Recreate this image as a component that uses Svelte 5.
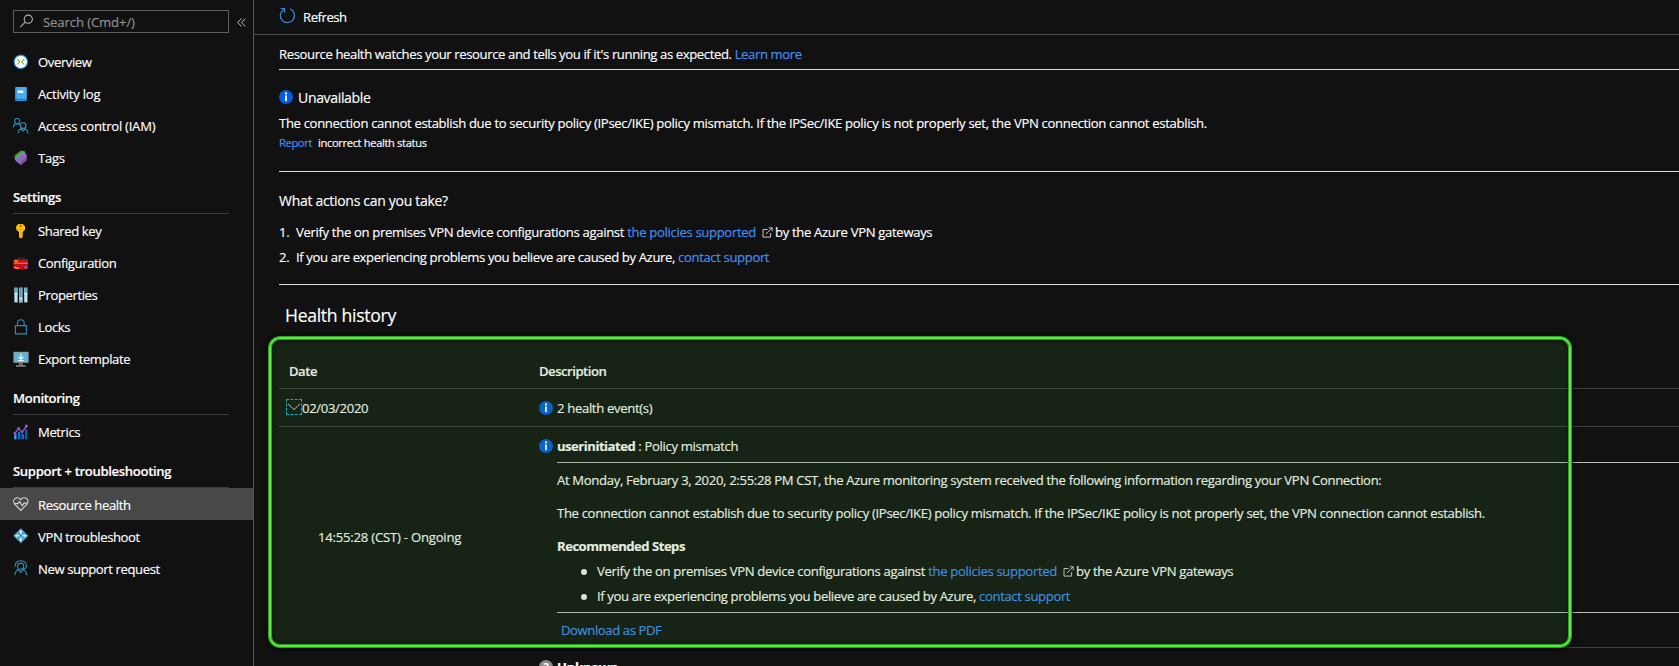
<script>
  const groups = [
    {
      title: '',
      items: [
        { icon: 'overview', label: 'Overview' },
        { icon: 'log', label: 'Activity log', loose: true },
        { icon: 'iam', label: 'Access control (IAM)', loose: true },
        { icon: 'tags', label: 'Tags', loose: true }
      ]
    },
    {
      title: 'Settings',
      items: [
        { icon: 'key', label: 'Shared key' },
        { icon: 'config', label: 'Configuration' },
        { icon: 'props', label: 'Properties' },
        { icon: 'lock', label: 'Locks' },
        { icon: 'export', label: 'Export template' }
      ]
    },
    { title: 'Monitoring', items: [{ icon: 'metrics', label: 'Metrics' }] },
    {
      title: 'Support + troubleshooting',
      items: [
        { icon: 'health', label: 'Resource health', selected: true },
        { icon: 'vpn', label: 'VPN troubleshoot' },
        { icon: 'support', label: 'New support request' }
      ]
    }
  ];
</script>

{#snippet info(size)}
  <svg class="info" width={size} height={size} viewBox="0 0 14 14">
    <circle cx="7" cy="7" r="7" fill="#015cda" />
    <circle cx="7" cy="3.4" r="1.15" fill="#fff" />
    <rect x="6.1" y="5.4" width="1.8" height="5.8" fill="#fff" />
  </svg>
{/snippet}

{#snippet external()}
  <svg class="ext" width="11" height="11" viewBox="0 0 11 11" fill="none" stroke="#c8c8c8">
    <path d="M5.5 2.5H1v7.6h7.6V6M3.8 7.2L10 .9M6.7.8h3.5v3.5" />
  </svg>
{/snippet}

{#snippet glyph(name)}
  <svg width="16" height="16" viewBox="0 0 16 16" fill="none">
    {#if name === 'overview'}
      <circle cx="7.8" cy="7.8" r="6.7" fill="#fff" stroke="#2b83d6" stroke-width="1.1" />
      <path d="M4.2 5l2.7 2.8-2.7 2.8M11.4 5L8.7 7.8l2.7 2.8" stroke="#76bc2d" stroke-width="1.1" />
    {:else if name === 'log'}
      <rect x="2" y="1" width="11.6" height="14" rx=".8" fill="#268fe0" />
      <path d="M3.4 1h9.4q.8 0 .8.8V13H3.4z" fill="#46adf0" />
      <path d="M2 13.3h11.6" stroke="#1878c8" stroke-width=".8" />
      <rect x="4.6" y="4.5" width="5.8" height="2.5" rx=".4" fill="#e9f7ff" />
    {:else if name === 'iam'}
      <g stroke="#368fb8" stroke-width="1.1">
        <circle cx="4.2" cy="3.1" r="2.6" />
        <circle cx="10.2" cy="7.6" r="2.8" />
        <path d="M.4 9.5c0-2.3 1.5-3.7 3.6-3.8M4.2 5.7l3 1.2M5.3 15.3c.1-3 1.9-4.8 4.7-4.8s4.5 1.8 5 4.8M7.7 10.8l2.4 2.2 2.5-2.3" />
      </g>
    {:else if name === 'tags'}
      <path d="M1.6 5.6L8 .6l4 .6.4 5.8-8.6 3.8-2.2-1.6z" fill="#579b18" />
      <path d="M2.2 8.2L10.2 2l2.4.9-7.4 8.9-2.8-1.6z" fill="#35b5dc" />
      <path d="M2.9 9.1L10.8 2.9l2.8 1v6.3l-5.8 4.9-4.9-3.8z" fill="#9468b8" />
      <path d="M7.8 15.1L13.6 10.2V7L7.4 12.4z" fill="#7a4aa4" />
    {:else if name === 'key'}
      <path d="M5.3.9h4.4L12 3.3v3.4L9.7 9v5.2L7.6 15.6 6 14.1V9L3.2 6.7V3.3z" fill="#ffc20b" />
      <circle cx="7.6" cy="2.9" r="1.1" fill="#8a6206" />
      <path d="M4 6.5h7.2M7.9 9v5.1" stroke="#ef9b0b" stroke-width=".9" />
    {:else if name === 'config'}
      <path d="M5 4.5V2.9h6v1.6" stroke="#303030" stroke-width="1.2" />
      <rect x=".6" y="4.2" width="14.4" height="10" rx="1" fill="#bf1218" />
      <path d="M.6 8.2h14.4" stroke="#f0706a" stroke-width="1.2" />
      <path d="M1.2 5h4.2L4.5 7.5H1.2z" fill="#f06a20" />
      <path d="M1 12.2q2.5 1.4 5 .9" stroke="#ff9b46" stroke-width="1.5" />
      <circle cx="12.8" cy="12.2" r="1.3" fill="#8b5ad0" />
    {:else if name === 'props'}
      <rect x="1.4" y=".6" width="3.2" height="14.8" fill="#c3e4ef" />
      <rect x="6.3" y=".6" width="3.2" height="14.8" fill="#c3e4ef" />
      <rect x="11.2" y=".6" width="3.2" height="14.8" fill="#c3e4ef" />
      <path d="M3 1v5M7.9 1v9.6M12.8 1v5" stroke="#4ba3cd" stroke-width="1.8" />
      <path d="M6.3 12h3.2v3.4H6.3z" fill="#82b9ce" />
      <path d="M1.4 6.4h3.2M11.2 6.4h3.2M6.3 11.8h3.2" stroke="#fff" stroke-width=".8" />
    {:else if name === 'lock'}
      <path d="M2.4 6.6h11v8.2h-11zM4.5 6.3V4q0-3.3 3.3-3.3T11.2 4v2.3" stroke="#3089b0" stroke-width="1.15" />
    {:else if name === 'export'}
      <path d="M6 11.8h3.6l.6 2.6H5.4z" fill="#666" />
      <rect x=".4" y=".8" width="15.2" height="11" fill="#999" />
      <rect x="1.4" y="1.7" width="13.2" height="9.2" fill="#58b5dd" />
      <path d="M3 15h9.6" stroke="#aaa" stroke-width="1.2" />
      <path d="M7.9 2.8v5.2M5.4 5.8l2.5 2.5 2.5-2.5M5.2 9.6h5.4" stroke="#fff" stroke-width="1.1" />
    {:else if name === 'metrics'}
      <path d="M2.5 15.2V9.8M6.1 15.2V7.5M9.8 15.2v-5.3" stroke="#0f6ac8" stroke-width="2.6" />
      <path d="M13.2 15.2V5.4" stroke="#0a5aa4" stroke-width="2.4" />
      <path d="M2.2 15.2V11" stroke="#6fb4ee" stroke-width="1.2" />
      <path d="M1.6 9.5l4-5.1 3.6 3.7 4.3-6.3" stroke="#a05ce0" stroke-width="1.3" />
      <g fill="#9a54dc">
        <circle cx="1.8" cy="9.3" r="1.2" />
        <circle cx="5.6" cy="4.4" r="1.3" />
        <circle cx="9.2" cy="8" r="1.2" />
        <circle cx="13.4" cy="1.9" r="1.5" />
      </g>
    {:else if name === 'health'}
      <g stroke="#d8d8d8" stroke-width="1.1">
        <path d="M7.8 14.4L1.6 8.1C.2 6.4.4 3.9 1.9 2.6c1.7-1.4 4.4-1.2 5.9 1 1.5-2.2 4.2-2.4 5.9-1 1.6 1.3 1.7 3.8.3 5.5z" />
        <path d="M2 7.6h3l1.6-2.1 2.7 4.2 1.7-2.6h2.8" />
      </g>
    {:else if name === 'vpn'}
      <path d="M7.8.3l7.5 7.5-7.5 7.5L.3 7.8z" fill="#4aa6d5" />
      <path d="M7.8 6.6V3M7.8 9v3.6M6.6 7.8H3M9 7.8h3.6" stroke="#fff" stroke-width="1.1" />
      <path d="M7.8 2.1l1.5 1.9h-3zM7.8 13.5l1.5-1.9h-3zM2.1 7.8L4 6.3v3zM13.5 7.8l-1.9-1.5v3z" fill="#fff" />
      <circle cx="7.8" cy="7.8" r="1" fill="#2672a5" />
    {:else}
      <g stroke="#368fb8" stroke-width="1.1">
        <path d="M2.3 6.7C1.7 3 4 .7 7.7.7s6.2 2.4 5.7 6.3c-.1 1.2-1 1.8-2.4 1.8H8.6" />
        <circle cx="7.6" cy="6.2" r="3.1" />
        <path d="M1.9 15.3c.2-3.2 1.6-5.2 3.8-6.4M13.7 15.3c-.2-3-1.6-5-3.6-6.2M5.2 9.4l2.5 3 2.6-3" />
      </g>
    {/if}
  </svg>
{/snippet}

{#snippet policyStep()}
  <span>Verify the on premises VPN device configurations against <a href="#p">the policies supported</a></span>{@render external()}<span>by the Azure VPN gateways</span>
{/snippet}

{#snippet supportStep()}
  <span class="ask">If you are experiencing problems you believe are caused by Azure, <a href="#s">contact support</a></span>
{/snippet}

<div class="page">
  <aside>
    <div class="searchrow">
      <div class="search">
        <svg width="15" height="15" viewBox="0 0 15 15" fill="none" stroke="#b4b4b4" stroke-width="1.1">
          <circle cx="9.3" cy="5.2" r="4.1" />
          <path d="M6.3 8.2L1.2 13.2" />
        </svg>
        <span>Search (Cmd+/)</span>
      </div>
      <svg class="collapse" width="9" height="9" viewBox="0 0 9 9" fill="none" stroke="#b8b8b8">
        <path d="M4.4.5l-3.6 4 3.6 4M8.2.5l-3.6 4 3.6 4" />
      </svg>
    </div>
    {#each groups as group}
      <nav>
        {#if group.title}
          <h3>{group.title}</h3>
        {/if}
        {#each group.items as item}
          <div class="item" class:selected={item.selected} class:loose={item.loose}>
            {@render glyph(item.icon)}
            <span>{item.label}</span>
          </div>
        {/each}
      </nav>
    {/each}
  </aside>

  <main>
    <div class="toolbar">
      <svg width="17" height="18" viewBox="0 0 17 18" fill="none" stroke="#3d86e0" stroke-width="1.2">
        <path d="M11 1.9A7.1 7.1 0 1 1 5 2.3M1.6 1.5h4v4" />
      </svg>
      <span>Refresh</span>
    </div>
    <div class="content">
      <p class="intro">Resource health watches your resource and tells you if it's running as expected. <a href="#l">Learn more</a></p>
      <hr />
      <div class="status">{@render info(14)}<span>Unavailable</span></div>
      <p class="reason">The connection cannot establish due to security policy (IPsec/IKE) policy mismatch. If the IPSec/IKE policy is not properly set, the VPN connection cannot establish.</p>
      <p class="report"><a href="#r">Report</a><span>incorrect health status</span></p>
      <hr />
      <p class="question">What actions can you take?</p>
      <div class="step"><b>1.</b>{@render policyStep()}</div>
      <div class="step"><b>2.</b>{@render supportStep()}</div>
      <hr class="last" />
      <h2>Health history</h2>

      <div class="table">
        <div class="row head"><span>Date</span><span>Description</span></div>
        <div class="row day">
          <div class="date">
            <span class="toggle">
              <svg width="14" height="8" viewBox="0 0 14 8" fill="none" stroke="#d0d0d0"><path d="M1 .8l6 5.8L13 .8" /></svg>
            </span>
            <span>02/03/2020</span>
          </div>
          <div class="desc">{@render info(14)}<span>2 health event(s)</span></div>
        </div>
        <div class="row event">
          <span class="time">14:55:28 (CST) - Ongoing</span>
          <div class="body">
            <div class="desc title">{@render info(14)}<span><strong>userinitiated</strong> : Policy mismatch</span></div>
            <div class="details">
              <p class="when">At Monday, February 3, 2020, 2:55:28 PM CST, the Azure monitoring system received the following information regarding your VPN Connection:</p>
              <p class="reason">The connection cannot establish due to security policy (IPsec/IKE) policy mismatch. If the IPSec/IKE policy is not properly set, the VPN connection cannot establish.</p>
              <p class="recommended"><strong>Recommended Steps</strong></p>
              <div class="step bullet"><i></i>{@render policyStep()}</div>
              <div class="step bullet"><i></i>{@render supportStep()}</div>
            </div>
            <a class="download" href="#d">Download as PDF</a>
          </div>
        </div>
        <div class="row unknown">
          <span></span>
          <div class="desc">
            <span class="qmark">?</span><strong>Unknown</strong>
          </div>
        </div>
        <div class="highlight"></div>
      </div>
    </div>
  </main>
</div>

<style>
  :global(body) {
    margin: 0;
    background: #111;
    overflow: hidden;
  }
  .page {
    display: flex;
    width: 100vw;
    height: 666px;
    overflow: hidden;
    background: #111;
    color: #fff;
    font: 13.1px/20px 'Open Sans', 'Noto Sans', sans-serif;
    letter-spacing: -0.33px;
    white-space: nowrap;
    -webkit-text-stroke: 0.15px;
  }
  p, h2, h3, hr { margin: 0; }
  a { color: #4490f8; text-decoration: none; }
  svg { flex: none; display: block; }
  strong { letter-spacing: -0.5px; }
  aside {
    box-sizing: border-box;
    flex: none;
    width: 254px;
    border-right: 1px solid #565656;
  }
  .searchrow {
    display: flex;
    align-items: center;
    gap: 8px;
    padding: 10px 0 13px 13px;
  }
  .search {
    box-sizing: border-box;
    display: flex;
    align-items: center;
    gap: 9px;
    width: 216px;
    height: 23px;
    padding-left: 5px;
    border: 1px solid #5f5f5f;
    color: #929292;
    letter-spacing: -0.1px;
  }
  .collapse { margin-top: 2px; }
  .item {
    display: flex;
    align-items: center;
    gap: 9px;
    height: 32px;
    padding-left: 13px;
    letter-spacing: -0.4px;
  }
  .loose { letter-spacing: -0.25px; }
  .selected { background: #484848; }
  h3 {
    height: 25px;
    margin: 0 24px 1px 13px;
    padding-top: 14px;
    border-bottom: 1px solid #3c3c3c;
    font-size: 13.1px;
    font-weight: 600;
    line-height: 18px;
  }
  nav:last-child h3 { margin-bottom: 0; }
  nav:last-child .item span { padding-top: 2px; }
  main { flex: 1; min-width: 0; }
  .toolbar {
    display: flex;
    align-items: center;
    gap: 7px;
    height: 34px;
    padding-left: 25px;
    border-bottom: 1px solid #4c4c4c;
    letter-spacing: -0.45px;
  }
  .toolbar svg { margin-top: -2px; }
  .content { padding-left: 25px; }
  hr { border: 0; height: 1px; background: #dcdcdc; }
  .intro { padding: 10px 0 5px; line-height: 19px; letter-spacing: -0.39px; }
  .status {
    display: flex;
    align-items: center;
    gap: 5px;
    margin-top: 18px;
    font-size: 14px;
  }
  .status .info { margin-top: -3px; }
  .content > .reason { margin-top: 5px; }
  .report {
    display: flex;
    gap: 6px;
    margin: 1px 0 19px;
    font-size: 11.1px;
    line-height: 18px;
  }
  .question { margin: 19px 0 9px; font-size: 14px; letter-spacing: -0.3px; }
  .step { display: flex; align-items: center; line-height: 25px; }
  .step b { width: 17px; font-weight: 400; }
  .ask { letter-spacing: -0.37px; }
  .ext { margin: 0 2px 0 6px; }
  .last { margin-top: 14px; }
  h2 {
    margin: 18px 0 27px 6px;
    font-size: 17.6px;
    font-weight: 400;
    line-height: 24px;
    letter-spacing: -0.3px;
  }
  .table { position: relative; }
  .row { display: grid; grid-template-columns: 260px 1fr; align-items: center; border-bottom: 1px solid #3e3e3e; }
  .head { height: 34px; font-weight: 600; letter-spacing: -0.48px; }
  .head span:first-child { padding-left: 10px; }
  .day { height: 37px; }
  .date, .desc { display: flex; align-items: center; }
  .date { padding-left: 7px; }
  .toggle {
    box-sizing: border-box;
    display: grid;
    place-items: center;
    width: 16px;
    height: 16px;
    margin-top: -2px;
    border: 1px dashed #00b4cc;
  }
  .desc { gap: 4px; }
  .event { height: 220px; }
  .time { padding-left: 39px; letter-spacing: -0.21px; }
  .body { align-self: start; padding-top: 9px; }
  .details {
    height: 149px;
    margin: 6px 0 7px 18px;
    border-top: 1px solid #bcbcbc;
    border-bottom: 1px solid #bcbcbc;
  }
  .when { margin-top: 7px; }
  .details .reason { margin: 13px 0; }
  .recommended { margin-bottom: 3px; }
  .bullet { padding-left: 23px; }
  .bullet i { width: 6px; height: 6px; margin: 0 10px 0 1px; border-radius: 50%; background: #f4f4f4; }
  .download { margin-left: 22px; letter-spacing: -0.4px; }
  .unknown { align-items: start; padding-top: 9px; border: 0; }
  .unknown strong { letter-spacing: -0.3px; }
  .qmark {
    width: 14px;
    height: 14px;
    border-radius: 50%;
    background: #8a8a8a;
    color: #fff;
    font-size: 11px;
    font-weight: 700;
    line-height: 14px;
    text-align: center;
  }
  .highlight {
    position: absolute;
    box-sizing: border-box;
    left: -10px;
    top: -17px;
    width: 1302px;
    height: 310px;
    border: 2px solid #52ee3c;
    border-radius: 11px;
    background: rgba(60, 140, 45, 0.15);
    box-shadow: 0 0 0 1px #349c28, inset 0 0 0 1px #349c28, 0 1px 5px 1px #000, inset 0 1px 4px 1px rgba(0, 0, 0, 0.5);
  }
</style>
